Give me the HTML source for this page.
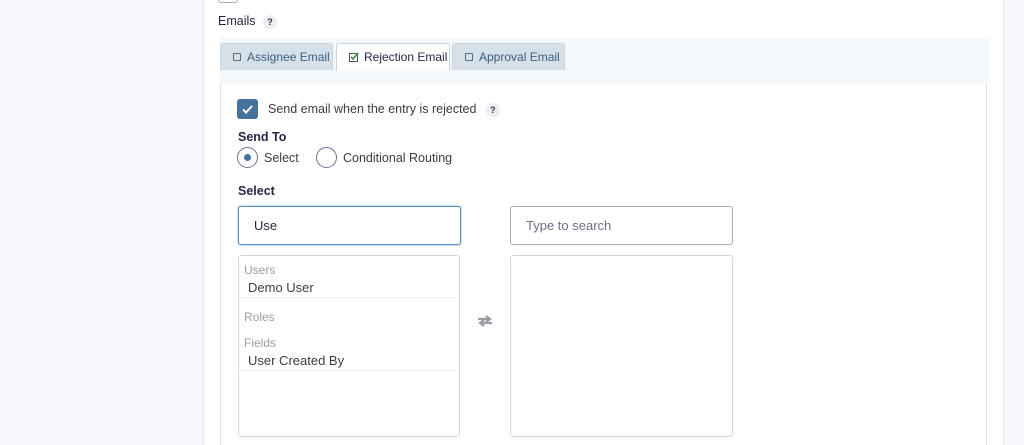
<!DOCTYPE html>
<html><head><style>
*{box-sizing:border-box;margin:0;padding:0}
html,body{width:1024px;height:445px;overflow:hidden}
body{background:#f6f8fb;font-family:"Liberation Sans",sans-serif;color:#242748;position:relative}
.abs{position:absolute}
.panel{left:203px;top:0;width:801px;height:445px;background:#fff;border-left:1px solid #e6e9f0;border-right:1px solid #e6e9f0}
.q{display:inline-block;width:14px;height:14px;border-radius:50%;background:#eceef5;font-size:9px;font-weight:bold;text-align:center;line-height:14px;color:#333}
.tab{top:43px;height:27px;font-size:12px;line-height:26px;padding-left:12px;color:#3d5f7d;background:#d5e0e9;border:1px solid #c9d6e2;border-bottom:none;border-radius:3px 3px 0 0}
.cb{display:inline-block;width:8px;height:8px;border:1px solid #5a6c80;border-radius:1px;margin-right:6px;vertical-align:0px}
.t{font-size:12.5px}
.input{border:1px solid #a8adc4;border-radius:3px;height:39px;background:#fff;font-size:13px;line-height:37px;padding-left:15px}
.list{border:1px solid #d4d7de;border-radius:3px;background:#fff}
.grp{position:absolute;left:5px;font-size:12px;color:#9a9ca3}
.item{position:absolute;left:9px;font-size:13px;color:#3a3d45}
.hr{position:absolute;left:0;right:0;height:1px;background:#eee}
</style></head><body>
<div class="abs panel"></div>
<div class="abs" style="left:218px;top:-5px;width:20px;height:8px;border:1px solid #aaa;border-radius:3px"></div>
<div class="abs t" style="left:218px;top:14px">Emails <span class="q" style="margin-left:4px">?</span></div>
<div class="abs" style="left:220px;top:38px;width:769px;height:46px;background:#f5f8fb"></div>
<div class="abs tab" style="left:220px;width:113px"><span class="cb"></span>Assignee Email</div>
<div class="abs tab" style="left:336px;width:114px;background:#fff;color:#242748;height:28px"><svg width="10" height="10" style="margin-right:5px;vertical-align:-1px"><rect x="0.5" y="1.5" width="8" height="8" fill="none" stroke="#555" stroke-width="1"/><path d="M2 5l2 2 5-6" stroke="#3a8a3a" stroke-width="1.6" fill="none"/></svg>Rejection Email</div>
<div class="abs tab" style="left:452px;width:113px"><span class="cb"></span>Approval Email</div>
<div class="abs" style="left:220px;top:83px;width:767px;height:362px;background:#fff;border-left:1px solid #d5e2ef;border-right:1px solid #d5e2ef"></div>
<div class="abs" style="left:237px;top:99px;width:21px;height:20px;background:#44729a;border-radius:3px"><svg width="21" height="20"><path d="M6 10.5l3 3 6-6.5" stroke="#fff" stroke-width="2" fill="none"/></svg></div>
<div class="abs t" style="left:268px;top:102px;color:#3a3d45">Send email when the entry is rejected <span class="q" style="margin-left:6px">?</span></div>
<div class="abs t" style="left:238px;top:130px;font-weight:bold">Send To</div>
<div class="abs" style="left:237px;top:147px;width:21px;height:21px;border:1px solid #6a7290;border-radius:50%"><div style="position:absolute;left:6px;top:6px;width:7px;height:7px;border-radius:50%;background:#44729a"></div></div>
<div class="abs t" style="left:264px;top:151px;color:#3a3d45">Select</div>
<div class="abs" style="left:316px;top:147px;width:21px;height:21px;border:1px solid #6a7290;border-radius:50%"></div>
<div class="abs t" style="left:343px;top:151px;color:#3a3d45">Conditional Routing</div>
<div class="abs t" style="left:238px;top:184px;font-weight:bold">Select</div>
<div class="abs input" style="left:238px;top:206px;width:223px;border-color:#5b8fc7;box-shadow:0 0 0 1px #cfe0f2">Use</div>
<div class="abs input" style="left:510px;top:206px;width:223px;color:#6b7089">Type to search</div>
<div class="abs list" style="left:238px;top:255px;width:222px;height:182px">
<div class="grp" style="top:7px">Users</div>
<div class="item" style="top:24px">Demo User</div>
<div class="hr" style="top:41px"></div>
<div class="grp" style="top:54px">Roles</div>
<div class="grp" style="top:80px">Fields</div>
<div class="item" style="top:97px">User Created By</div>
<div class="hr" style="top:114px"></div>
</div>
<div class="abs" style="left:474px;top:313px"><svg width="22" height="16"><path d="M4 6h12M12 3l4 3-4 3M18 10H6M10 7l-4 3 4 3" stroke="#9a9ca3" stroke-width="2.2" fill="none"/></svg></div>
<div class="abs list" style="left:510px;top:255px;width:223px;height:182px"></div>
</body></html>
